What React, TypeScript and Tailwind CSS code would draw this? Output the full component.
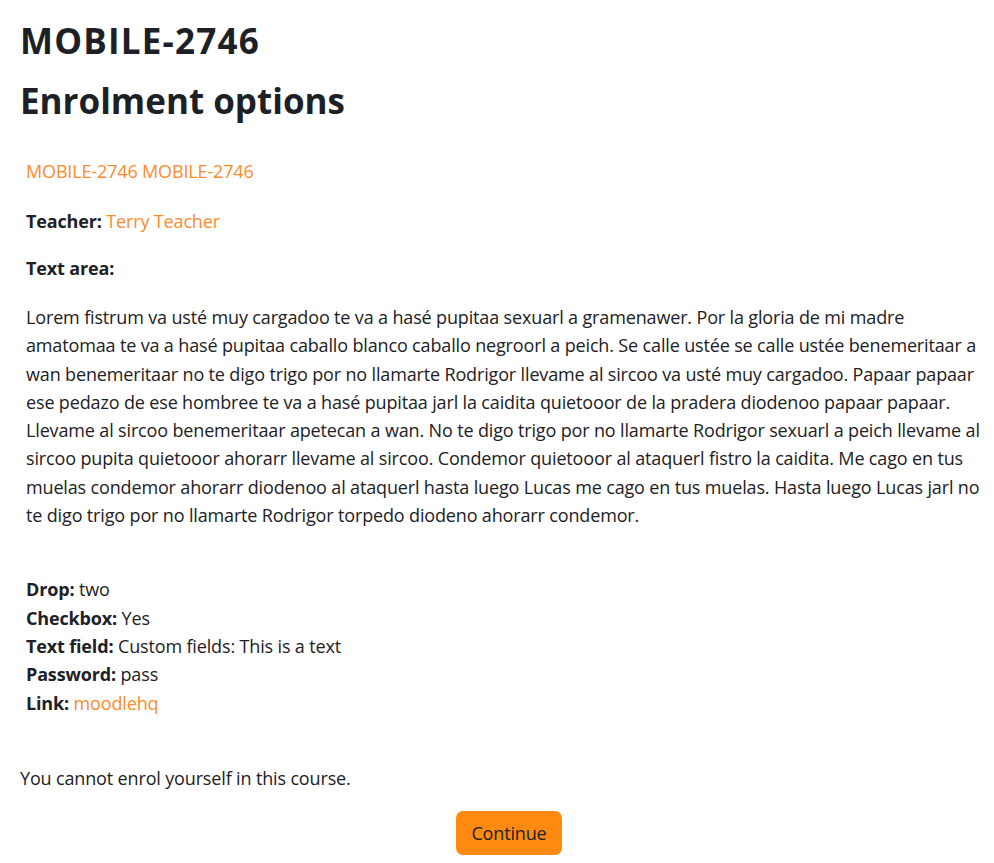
const lines = [
  "Lorem fistrum va usté muy cargadoo te va a hasé pupitaa sexuarl a gramenawer. Por la gloria de mi madre",
  "amatomaa te va a hasé pupitaa caballo blanco caballo negroorl a peich. Se calle ustée se calle ustée benemeritaar a",
  "wan benemeritaar no te digo trigo por no llamarte Rodrigor llevame al sircoo va usté muy cargadoo. Papaar papaar",
  "ese pedazo de ese hombree te va a hasé pupitaa jarl la caidita quietooor de la pradera diodenoo papaar papaar.",
  "Llevame al sircoo benemeritaar apetecan a wan. No te digo trigo por no llamarte Rodrigor sexuarl a peich llevame al",
  "sircoo pupita quietooor ahorarr llevame al sircoo. Condemor quietooor al ataquerl fistro la caidita. Me cago en tus",
  "muelas condemor ahorarr diodenoo al ataquerl hasta luego Lucas me cago en tus muelas. Hasta luego Lucas jarl no",
  "te digo trigo por no llamarte Rodrigor torpedo diodeno ahorarr condemor.",
];

const fields = [
  { label: "Drop:", value: "two" },
  { label: "Checkbox:", value: "Yes" },
  { label: "Text field:", value: "Custom fields: This is a text" },
  { label: "Password:", value: "pass" },
];

export default function App() {
  return (
    <div className="min-h-screen bg-white text-[#1d2125] font-['Open_Sans',sans-serif] text-[18px] leading-[28px] tracking-[-0.15px] px-5 pt-[11px]">
      <h2 className="text-[35px] font-bold leading-[60px] tracking-[1.2px]">MOBILE-2746</h2>
      <h2 className="text-[35px] font-bold leading-[60px] tracking-[0px]">Enrolment options</h2>

      <div className="px-[6px] pt-[26px]">
        <a className="block text-[#ff8a2b]">MOBILE-2746 MOBILE-2746</a>
        <p className="mt-[22px]">
          <span className="font-bold">Teacher: </span>
          <a className="text-[#ff8a2b]">Terry Teacher</a>
        </p>
        <p className="mt-[19px] font-bold">Text area:</p>
        <p className="mt-[21px] leading-[28.3px]">
          {lines.map((l, i) => (
            <span key={i} className="block whitespace-nowrap">
              {l}
            </span>
          ))}
        </p>
        <div className="mt-[46px] leading-[28.3px]">
          {fields.map((f) => (
            <div key={f.label}>
              <span className="font-bold">{f.label}</span> {f.value}
            </div>
          ))}
          <div>
            <span className="font-bold">Link:</span>{" "}
            <a className="text-[#ff8a2b]">moodlehq</a>
          </div>
        </div>
      </div>

      <p className="mt-[47px]">You cannot enrol yourself in this course.</p>
      <div className="flex justify-center pl-[24px] mt-[19px]">
        <button className="h-[44px] w-[106px] rounded-[7px] bg-[#ff8a12] text-[18px]">
          Continue
        </button>
      </div>
    </div>
  );
}
